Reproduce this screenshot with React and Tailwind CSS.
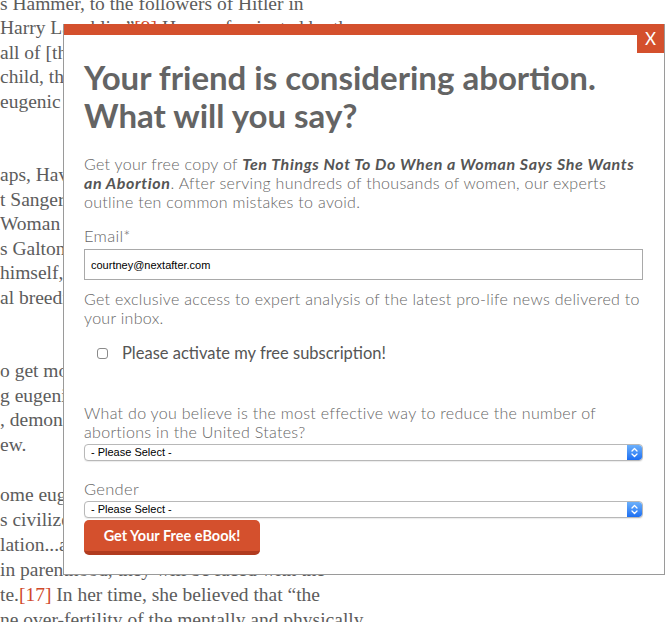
import React from 'react';

const paragraphs = [
  {
    gap: 'mt-0 leading-[24.4px]',
    lines: [
      's Hammer, to the followers of Hitler in',
      ['Harry Laughlin.”', '[9]', ' He was fascinated by the'],
      'all of [them] were of a',
      'child, the daughter of a',
      'eugenic thought and',
    ],
  },
  {
    gap: 'mt-[49px] leading-[24.5px]',
    lines: ['aps, Havelock Ellis', 't Sanger was a true', 'Woman and the New', 's Galton, the founder', 'himself, she believed', 'al breeding programs'],
  },
  {
    gap: 'mt-[49px] leading-[24.5px]',
    lines: ['o get more support', 'g eugenic causes', ', demonstrating', 'ew.'],
  },
  {
    gap: 'mt-[24.5px] leading-[25px]',
    lines: [
      'ome eugenicists',
      's civilized races',
      'lation...and the',
      'in parenthood, they will be faced with the',
      ['te.', '[17]', ' In her time, she believed that “the'],
      'ne over-fertility of the mentally and physically',
    ],
  },
];

function BgLine({ line }) {
  if (typeof line === 'string') return <div className="whitespace-nowrap">{line}</div>;
  return (
    <div className="whitespace-nowrap">
      {line[0]}
      <span className="text-[#d0492a]">{line[1]}</span>
      {line[2]}
    </div>
  );
}

function FakeSelect() {
  return (
    <div className="flex h-[17px] items-stretch overflow-hidden rounded-[4px] border border-[#b8b8b8] bg-white shadow-[0_1px_1px_rgba(0,0,0,0.08)]">
      <div className="flex flex-1 items-center pl-[6px] font-['Liberation_Sans',sans-serif] text-[11px] tracking-normal text-black">- Please Select -</div>
      <div className="flex w-[15px] items-center justify-center rounded-r-[3px] bg-gradient-to-b from-[#6cb0fb] to-[#1c6ef2]">
        <svg width="7" height="11" viewBox="0 0 7 11" fill="none" stroke="white" strokeWidth="1.3" strokeLinecap="round" strokeLinejoin="round">
          <path d="M1 4 L3.5 1.5 L6 4" />
          <path d="M1 7 L3.5 9.5 L6 7" />
        </svg>
      </div>
    </div>
  );
}

export default function App() {
  return (
    <div className="relative h-[622px] w-[665px] overflow-hidden bg-white">
      <div className="-mt-[8px] font-['Liberation_Serif',serif] text-[19.5px] text-[#5c5c5c]">
        {paragraphs.map((p, i) => (
          <div key={i} className={p.gap}>
            {p.lines.map((l, j) => (
              <BgLine key={j} line={l} />
            ))}
          </div>
        ))}
      </div>

      <div className="absolute left-[63px] top-[24px] h-[551px] w-[602px] border-x border-b border-[#9a9a9a] bg-white font-['Lato',sans-serif]">
        <div className="h-[11px] bg-[#d4502d]" />
        <button className="absolute right-0 top-0 flex h-[29px] w-[27px] items-center justify-center bg-[#d4502d] text-[17px] text-white">
          X
        </button>
        <div className="pl-[20px] pr-[21px] pt-[23px]">
          <h1 className="text-[33px] font-bold leading-[38px] text-[#646464]">
            Your friend is considering abortion.
            <br />
            What will you say?
          </h1>
          <p className="mt-[20px] text-[16px] font-light leading-[19px] tracking-[0.3px] text-[#666]">
            Get your free copy of{' '}
            <span className="font-bold italic tracking-[0.6px] text-[#555]">Ten Things Not To Do When a Woman Says She Wants an Abortion</span>. After serving
            hundreds of thousands of women, our experts outline ten common mistakes to avoid.
          </p>
          <div className="mt-[15px] text-[16.5px] font-light leading-[20px] tracking-[0.3px] text-[#666]">Email*</div>
          <input
            readOnly
            value="courtney@nextafter.com"
            className="mt-[3px] block h-[31px] w-full border border-[#a9a9a9] px-[6px] font-['Liberation_Sans',sans-serif] text-[11px] text-black outline-none"
          />
          <p className="mt-[9px] text-[16px] font-light leading-[19px] tracking-[0.3px] text-[#666]">
            Get exclusive access to expert analysis of the latest pro-life news delivered to your inbox.
          </p>
          <label className="mt-[16px] flex h-[20px] items-center pl-[13px]">
            <span className="h-[11px] w-[11px] rounded-[3px] border border-[#8a8a8a] bg-white" />
            <span className="ml-[14px] text-[16.5px] text-[#555]">Please activate my free subscription!</span>
          </label>
          <p className="mt-[40px] text-[16px] font-light leading-[19px] tracking-[0.3px] text-[#666]">
            What do you believe is the most effective way to reduce the number of abortions in the United States?
          </p>
          <div className="mt-[3px]">
            <FakeSelect />
          </div>
          <div className="mt-[18px] text-[16.5px] font-light leading-[20px] tracking-[0.3px] text-[#666]">Gender</div>
          <div className="mt-[2px]">
            <FakeSelect />
          </div>
          <button className="mt-[2px] flex h-[35px] w-[176px] items-center justify-center rounded-[5px] border-b-[4px] border-[#b13b1f] bg-[#d4502d] text-[14.5px] font-bold text-white">
            Get Your Free eBook!
          </button>
        </div>
      </div>
    </div>
  );
}
